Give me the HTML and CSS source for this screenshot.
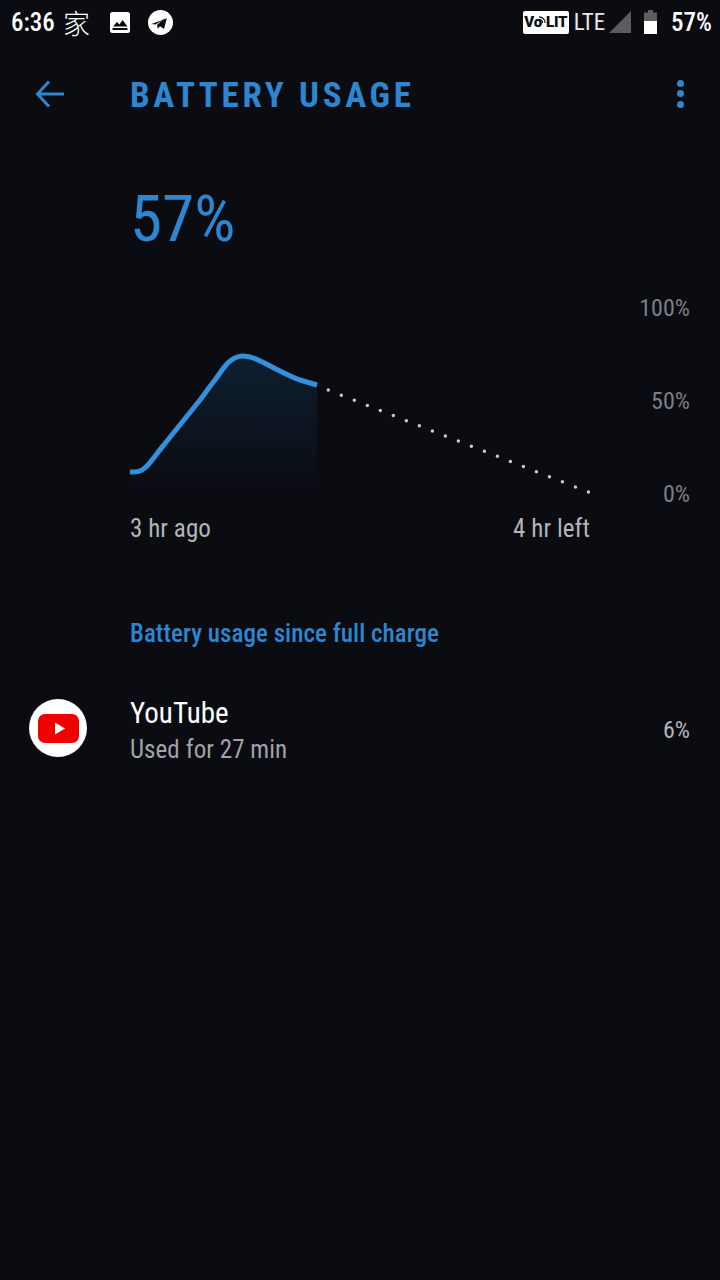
FILE: index.html
```html
<!DOCTYPE html>
<html>
<head>
    <title>Battery Usage</title>
    <meta name="viewport" content="width=device-width, initial-scale=1">
    <link rel="stylesheet" href="styles.css">
</head>
<body>
    <div class="status-bar">
        <div class="status-left">
            <span class="status-time">6:36</span>
            <span class="status-cjk">家</span>
            <svg class="icon-image" width="20" height="21" viewBox="0 0 20 21">
                <rect x="0" y="0" width="20" height="21" rx="2.5" fill="#fff"/>
                <rect x="2.500" y="16" width="15" height="2" fill="#0a0c12"/>
                <path d="M3 14.500l4-4.500 2.500 2.500 3-4.500 5 6.500z" fill="#0a0c12"/>
            </svg>
            <svg class="icon-telegram" width="25" height="25" viewBox="0 0 25 25">
                <circle cx="12.500" cy="12.500" r="12.500" fill="#fff"/>
                <path d="M3.500 14L18.800 8.200 16 19l-4-2.800-2.200 2.600-.8-3.800 5.500-5.200-6.800 4.600z" fill="#0a0c12"/>
            </svg>
        </div>
        <div class="status-right">
            <span class="volte">
                <span class="volte-text">V<span class="volte-o">o</span>LIT</span>
                <svg class="volte-arcs" width="7" height="7" viewBox="0 0 7 7">
                    <path d="M0 3.500A3.500 3.500 0 0 1 3.500 7M0 .8A6.200 6.200 0 0 1 6.200 7" fill="none" stroke="#0a0c12" stroke-width="1.200"/>
                </svg>
            </span>
            <span class="status-lte">LTE</span>
            <svg class="icon-signal" width="22" height="22" viewBox="0 0 22 22">
                <path d="M0 22L22 0v22z" fill="#5c5d60"/>
            </svg>
            <svg class="icon-battery" width="13" height="24" viewBox="0 0 13 24">
                <path d="M4 0h5v2.500h4V11H0V2.500h4z" fill="#5c5d60"/>
                <rect x="0" y="11" width="13" height="13" fill="#fff"/>
            </svg>
            <span class="status-percent">57%</span>
        </div>
    </div>

    <div class="toolbar">
        <svg class="icon-back" width="30" height="30" viewBox="0 0 30 30">
            <path d="M29 15H3M14 2.500L2.500 15 14 27.500" fill="none" stroke="#2e86d0" stroke-width="3"/>
        </svg>
        <h1 class="toolbar-title">BATTERY USAGE</h1>
        <div class="overflow-menu">
            <span class="dot"></span>
            <span class="dot"></span>
            <span class="dot"></span>
        </div>
    </div>

    <div class="level">57%</div>

    <div class="chart">
        <div class="chart-main">
            <svg class="chart-svg" width="460" height="200" viewBox="130 300 460 200">
                <defs>
                    <linearGradient id="fade" x1="0" y1="0" x2="0" y2="1">
                        <stop offset="0" stop-color="#0d1f30"/>
                        <stop offset="1" stop-color="#0a0c12"/>
                    </linearGradient>
                </defs>
                <path d="M130 472C137 472 141 472 146 467C152 461 157 453 163 446L200 400C206 392 210 386 215 380C222 371 229 356 243 356C253 356 263 362 272 367C282 372 291 377 300 380L317 385V488H130z" fill="url(#fade)"/>
                <path d="M130 472C137 472 141 472 146 467C152 461 157 453 163 446L200 400C206 392 210 386 215 380C222 371 229 356 243 356C253 356 263 362 272 367C282 372 291 377 300 380L317 385" fill="none" stroke="#3490dc" stroke-width="5"/>
                <line x1="328.300" y1="390.100" x2="589.300" y2="492.400" stroke="#c8c9cb" stroke-width="3.500" stroke-linecap="round" stroke-dasharray="0 13.970"/>
            </svg>
            <div class="chart-labels">
                <span>3 hr ago</span>
                <span>4 hr left</span>
            </div>
        </div>
        <div class="chart-axis">
            <span>100%</span>
            <span>50%</span>
            <span>0%</span>
        </div>
    </div>

    <h2 class="section-title">Battery usage since full charge</h2>

    <div class="app-row">
        <div class="app-icon">
            <svg width="41" height="29" viewBox="0 0 41 29">
                <rect width="41" height="29" rx="7" fill="#f00000"/>
                <path d="M17 8.500l10 6-10 6z" fill="#fff"/>
            </svg>
        </div>
        <div class="app-text">
            <div class="app-name">YouTube</div>
            <div class="app-detail">Used for 27 min</div>
        </div>
        <div class="app-percent">6%</div>
    </div>
</body>
</html>
```

FILE: styles.css
```css
body {
    margin: 0;
    background: #0a0c12;
    color: #fff;
    font-family: Roboto, sans-serif;
    font-stretch: condensed;
    height: 1280px;
    overflow: hidden;
}
.status-bar {
    display: flex;
    justify-content: space-between;
    align-items: center;
    height: 44px;
    padding: 0 8px 0 11px;
}
.status-left, .status-right {
    display: flex;
    align-items: center;
}
.status-time {
    font-size: 25px;
    font-weight: 500;
}
.status-cjk {
    font-family: "Noto Sans CJK SC", sans-serif;
    font-size: 27px;
    font-weight: 300;
    margin-left: 8px;
}
.icon-image {
    margin-left: 20px;
}
.icon-telegram {
    margin-left: 18px;
}
.volte {
    position: relative;
    display: flex;
    align-items: center;
    justify-content: center;
    width: 46px;
    height: 23px;
    background: #fff;
    border-radius: 2px;
}
.volte-text {
    color: #0a0c12;
    font-size: 15px;
    font-weight: 900;
    font-stretch: normal;
    letter-spacing: -0.2px;
}
.volte-o {
    margin-right: 4px;
}
.volte-arcs {
    position: absolute;
    left: 16px;
    top: 5px;
}
.status-lte {
    font-size: 23px;
    margin-left: 5px;
    color: #e8e8e8;
}
.icon-signal {
    margin-left: 4px;
}
.icon-battery {
    margin-left: 13px;
}
.status-percent {
    font-size: 25px;
    font-weight: 500;
    margin-left: 14px;
}
.toolbar {
    display: flex;
    align-items: center;
    height: 102px;
    padding: 0 36px 0 35px;
}
.icon-back {
    margin-bottom: 3px;
}
.toolbar-title {
    flex: 1;
    margin: 0 0 0 65px;
    color: #2e86d0;
    font-size: 35px;
    font-weight: 700;
    letter-spacing: 3.7px;
}
.overflow-menu {
    display: flex;
    flex-direction: column;
    gap: 3.5px;
    margin-bottom: 3px;
}
.dot {
    width: 7px;
    height: 7px;
    border-radius: 50%;
    background: #2e86d0;
}
.level {
    margin: 28px 0 0 130px;
    color: #2e86d0;
    font-size: 65px;
    line-height: 90px;
}
.chart {
    display: flex;
    justify-content: space-between;
    margin-top: 36px;
    padding: 0 30px 0 130px;
}
.chart-svg {
    display: block;
}
.chart-labels {
    display: flex;
    justify-content: space-between;
    margin-top: 14px;
    color: #b4b5b8;
    font-size: 25px;
    letter-spacing: 0.07px;
}
.chart-axis {
    display: flex;
    flex-direction: column;
    justify-content: space-between;
    align-items: flex-end;
    height: 214px;
    margin-top: -6px;
    color: #7d7e82;
    font-size: 24px;
    line-height: 28px;
}
.section-title {
    margin: 76px 0 0 130px;
    color: #2e86d0;
    font-size: 25px;
    font-weight: 500;
    letter-spacing: 0.05px;
}
.app-row {
    display: flex;
    align-items: center;
    margin-top: 44px;
    padding: 0 30px 0 29px;
}
.app-icon {
    display: flex;
    align-items: center;
    justify-content: center;
    width: 58px;
    height: 58px;
    border-radius: 50%;
    background: #fff;
}
.app-text {
    flex: 1;
    margin-left: 43px;
    padding-top: 4px;
}
.app-name {
    font-size: 29px;
}
.app-detail {
    margin-top: 5px;
    color: #a2a3a7;
    font-size: 25px;
    letter-spacing: 0.07px;
}
.app-percent {
    padding-top: 4px;
    color: #b4b5b8;
    font-size: 24px;
}
```
